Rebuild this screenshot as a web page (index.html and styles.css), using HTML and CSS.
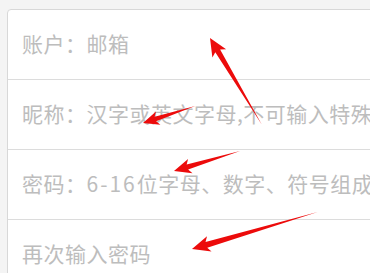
FILE: index.html
```html
<!DOCTYPE html>
<html lang="zh">
<head>
<meta charset="utf-8">
<link rel="stylesheet" href="styles.css">
</head>
<body>
<div class="page">
  <div class="card">
    <div class="row"><span class="ph">账户：邮箱</span></div>
    <div class="row"><span class="ph">昵称：汉字或英文字母,不可输入特殊</span></div>
    <div class="row"><span class="ph">密码：<span class="num">6-16</span>位字母、数字、符号组成</span></div>
    <div class="row"><span class="ph">再次输入密码</span></div>
  </div>
  <svg class="arrows" width="370" height="273" viewBox="0 0 370 273">
    <g fill="#ec0b0b">
      <g transform="translate(210,38) rotate(59.1)">
        <polygon points="0,0 18,-8 15,-2.8 101,0 15,2.8 18,8"/>
      </g>
      <g transform="translate(143,123) rotate(-18.1)">
        <polygon points="0,0 16,-7 13,-2.4 55,0 13,2.4 16,7"/>
      </g>
      <g transform="translate(174,171) rotate(-16.9)">
        <polygon points="0,0 17,-7.5 14,-2.6 69,0 14,2.6 17,7.5"/>
      </g>
      <g transform="translate(192,249) rotate(-16.4)">
        <polygon points="0,0 18,-8 15,-3 131,0 15,3 18,8"/>
      </g>
    </g>
  </svg>
</div>
</body>
</html>
```
FILE: styles.css
```css
html, body {
  margin: 0;
  padding: 0;
  background: #f4f4f4;
  overflow: hidden;
}
.page {
  position: relative;
  width: 370px;
  height: 273px;
  overflow: hidden;
  padding: 9px 0 0 7px;
  box-sizing: border-box;
}
.card {
  width: 420px;
  background: #ffffff;
  border: 1px solid #d8d8d8;
  border-radius: 4px 0 0 0;
  display: flex;
  flex-direction: column;
}
.row {
  height: 70px;
  box-sizing: border-box;
  border-bottom: 1px solid #dcdcdc;
  display: flex;
  align-items: center;
  padding: 0 0 3px 14px;
  white-space: nowrap;
}
.ph {
  font-family: "Noto Sans CJK SC", "Noto Sans", sans-serif;
  font-size: 21px;
  letter-spacing: 0.5px;
  color: #bdbdbd;
}
.num {
  letter-spacing: 2px;
}
.arrows {
  position: absolute;
  left: 0;
  top: 0;
}
```
